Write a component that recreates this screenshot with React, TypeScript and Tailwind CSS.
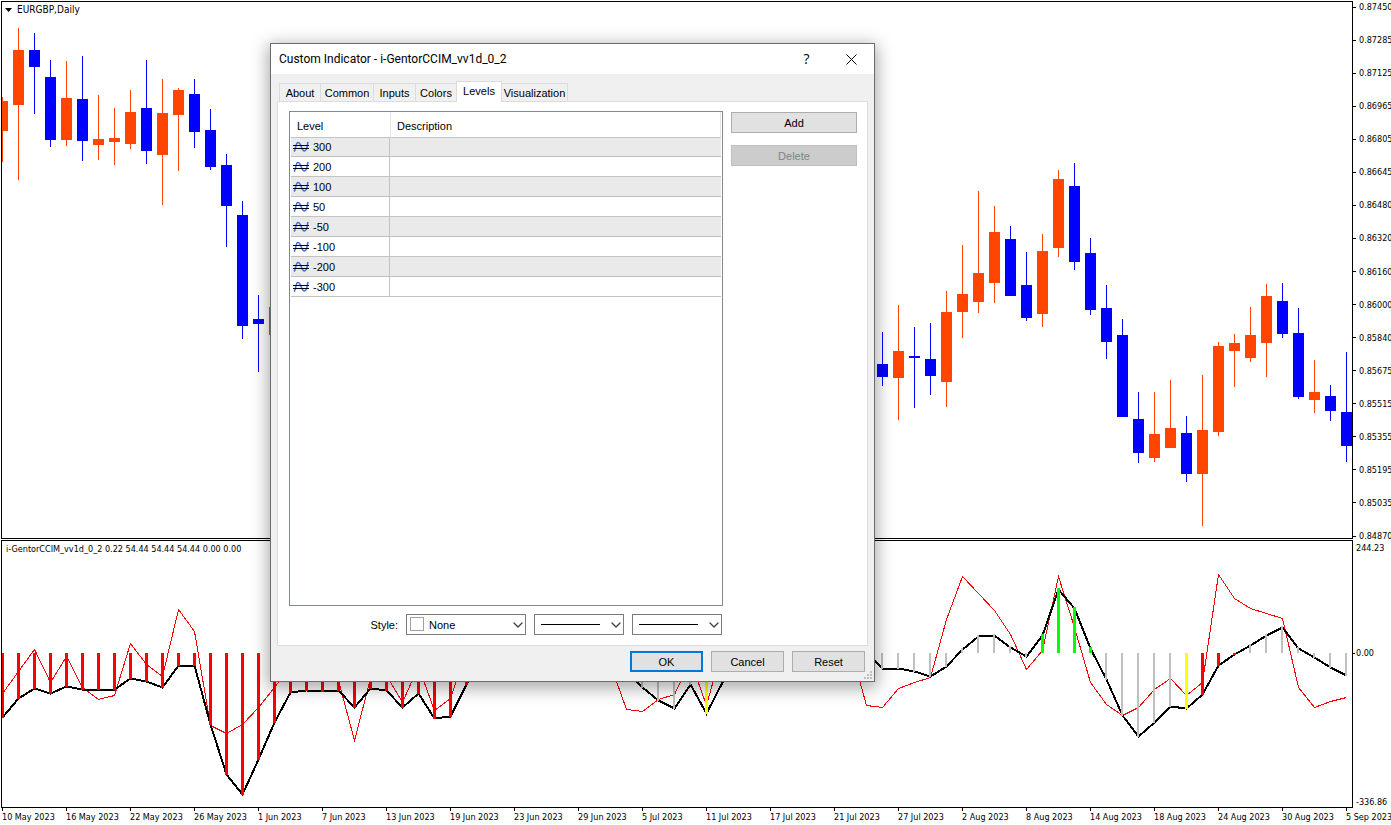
import { ChevronDown } from 'lucide-react'
import type { ReactNode } from 'react'

type CandleColor = 'up' | 'down'
type BarColor = 'red' | 'gray' | 'green' | 'yellow'

// slot, high, low, body top, body bottom
type Candle = [number, number, number, number, number, CandleColor]

const candleFill: Record<CandleColor, string> = {
  up: 'fill-[#ff4500]',
  down: 'fill-[#0000ff]',
}

const barStyle: Record<BarColor, { className: string; width: number }> = {
  red: { className: 'fill-[#ff0000]', width: 3 },
  gray: { className: 'fill-[#c0c0c0]', width: 2 },
  green: { className: 'fill-[#00ff00]', width: 3 },
  yellow: { className: 'fill-[#ffff00]', width: 3 },
}

const candles: Candle[] = [
  [0, 97, 162, 101, 131, 'up'],
  [1, 28, 180, 50, 105, 'up'],
  [2, 33, 114, 50, 67, 'down'],
  [3, 60, 147, 77, 140, 'down'],
  [4, 61, 146, 98, 140, 'up'],
  [5, 56, 161, 99, 141, 'down'],
  [6, 95, 160, 139, 145, 'up'],
  [7, 108, 165, 138, 142, 'up'],
  [8, 90, 149, 112, 144, 'up'],
  [9, 60, 164, 108, 151, 'down'],
  [10, 79, 205, 113, 155, 'up'],
  [11, 88, 171, 90, 115, 'up'],
  [12, 79, 148, 94, 132, 'down'],
  [13, 109, 170, 130, 167, 'down'],
  [14, 154, 247, 165, 206, 'down'],
  [15, 201, 339, 215, 326, 'down'],
  [16, 295, 372, 319, 324, 'down'],
  [17, 300, 340, 307, 335, 'up'],
  [55, 332, 386, 364, 377, 'down'],
  [56, 305, 420, 351, 378, 'up'],
  [57, 327, 408, 356, 358, 'down'],
  [58, 323, 395, 359, 376, 'down'],
  [59, 291, 407, 312, 382, 'up'],
  [60, 245, 338, 294, 312, 'up'],
  [61, 191, 313, 273, 302, 'up'],
  [62, 206, 303, 232, 283, 'up'],
  [63, 226, 296, 239, 296, 'down'],
  [64, 252, 321, 285, 318, 'down'],
  [65, 234, 327, 251, 314, 'up'],
  [66, 170, 257, 179, 248, 'up'],
  [67, 163, 270, 186, 262, 'down'],
  [68, 238, 315, 253, 310, 'down'],
  [69, 285, 359, 308, 342, 'down'],
  [70, 319, 417, 335, 417, 'down'],
  [71, 392, 463, 419, 453, 'down'],
  [72, 392, 462, 434, 458, 'up'],
  [73, 380, 448, 428, 448, 'up'],
  [74, 416, 482, 433, 474, 'down'],
  [75, 375, 526, 430, 474, 'up'],
  [76, 342, 436, 346, 432, 'up'],
  [77, 334, 387, 343, 351, 'up'],
  [78, 307, 362, 335, 358, 'up'],
  [79, 284, 377, 296, 343, 'up'],
  [80, 283, 338, 301, 334, 'down'],
  [81, 308, 399, 333, 397, 'down'],
  [82, 360, 413, 392, 400, 'up'],
  [83, 385, 421, 396, 411, 'down'],
  [84, 352, 462, 412, 446, 'down'],
]

interface Segment {
  start: number
  values: number[]
}

const mainLine: Segment[] = [
  {
    start: 0,
    values: [
      717, 698, 688, 693, 686, 689, 689, 689, 678, 681, 687, 665, 665, 724,
      774, 794, 759, 722, 692, 690, 691, 690, 707, 688, 690, 707, 693, 718,
      716, 684, 660,
    ],
  },
  { start: 39, values: [672, 687, 700, 708, 684, 713, 682, 655] },
  {
    start: 54,
    values: [
      652, 668, 668, 671, 676, 666, 649, 636, 635, 647, 656, 635, 589, 608,
      648, 679, 715, 736, 722, 706, 708, 694, 665, 654, 645, 635, 627, 648,
      657, 667, 675,
    ],
  },
]

const signalLine: Segment[] = [
  {
    start: 0,
    values: [
      693, 671, 649, 682, 656, 687, 699, 695, 643, 664, 676, 609, 631, 725,
      733, 724, 707, 687, 665, 660, 660, 680, 740, 678, 675, 702, 666, 710,
      698, 650,
    ],
  },
  { start: 38, values: [664, 709, 711, 699, 694, 660, 705, 647] },
  {
    start: 53,
    values: [
      647, 705, 707, 688, 682, 677, 619, 576, 593, 610, 634, 669, 650, 576,
      627, 682, 704, 715, 707, 689, 678, 695, 682, 574, 598, 608, 613, 618,
      687, 707, 701, 697,
    ],
  },
]

const barRanges: { from: number; to: number; color: BarColor }[] = [
  { from: 0, to: 29, color: 'red' },
  { from: 39, to: 43, color: 'gray' },
  { from: 44, to: 44, color: 'yellow' },
  { from: 55, to: 64, color: 'gray' },
  { from: 65, to: 68, color: 'green' },
  { from: 69, to: 73, color: 'gray' },
  { from: 74, to: 74, color: 'yellow' },
  { from: 75, to: 77, color: 'red' },
  { from: 78, to: 84, color: 'gray' },
]

const priceLabels = [
  '0.87450',
  '0.87285',
  '0.87125',
  '0.86965',
  '0.86805',
  '0.86645',
  '0.86480',
  '0.86320',
  '0.86160',
  '0.86000',
  '0.85840',
  '0.85675',
  '0.85515',
  '0.85355',
  '0.85195',
  '0.85035',
  '0.84870',
]

const dateLabels = [
  '10 May 2023',
  '16 May 2023',
  '22 May 2023',
  '26 May 2023',
  '1 Jun 2023',
  '7 Jun 2023',
  '13 Jun 2023',
  '19 Jun 2023',
  '23 Jun 2023',
  '29 Jun 2023',
  '5 Jul 2023',
  '11 Jul 2023',
  '17 Jul 2023',
  '21 Jul 2023',
  '27 Jul 2023',
  '2 Aug 2023',
  '8 Aug 2023',
  '14 Aug 2023',
  '18 Aug 2023',
  '24 Aug 2023',
  '30 Aug 2023',
  '5 Sep 2023',
]

const tabs = [
  { name: 'About', width: 'w-[42px]' },
  { name: 'Common', width: 'w-[54px]' },
  { name: 'Inputs', width: 'w-[43px]' },
  { name: 'Colors', width: 'w-[42px]' },
  { name: 'Levels', width: 'w-[46px]' },
  { name: 'Visualization', width: 'w-[67px]' },
]

const levels = [300, 200, 100, 50, -50, -100, -200, -300]

const ZERO_Y = 653
const slotX = (slot: number) => 2 + slot * 16

function linePoints({ start, values }: Segment) {
  return values.map((y, i) => `${slotX(start + i)},${y}`).join(' ')
}

function mainValue(slot: number) {
  const segment = mainLine.find(
    ({ start, values }) => slot >= start && slot < start + values.length,
  )
  return segment ? segment.values[slot - segment.start] : ZERO_Y
}

function PriceChart() {
  return (
    <svg
      aria-label="EURGBP daily candles"
      className="block h-full w-full"
      preserveAspectRatio="none"
      role="img"
      shapeRendering="crispEdges"
      viewBox="2 2 1350 536"
    >
      {candles.map(([slot, high, low, top, bottom, color]) => (
        <g key={slot} className={candleFill[color]}>
          <rect height={low - high} width={1} x={slotX(slot)} y={high} />
          <rect height={bottom - top} width={11} x={slotX(slot) - 5} y={top} />
        </g>
      ))}
    </svg>
  )
}

function IndicatorChart() {
  return (
    <svg
      aria-label="i-GentorCCIM indicator"
      className="block h-full w-full"
      preserveAspectRatio="none"
      role="img"
      shapeRendering="crispEdges"
      viewBox="2 541 1350 266"
    >
      <g fill="none" transform="translate(0.5 0.5)">
        {signalLine.map((segment) => (
          <polyline
            key={segment.start}
            points={linePoints(segment)}
            stroke="#ff0000"
            strokeWidth={1}
          />
        ))}
        {mainLine.map((segment) => (
          <polyline
            key={segment.start}
            points={linePoints(segment)}
            stroke="#000000"
            strokeWidth={2}
          />
        ))}
      </g>
      {barRanges.map(({ from, to, color }) =>
        Array.from({ length: to - from + 1 }, (_, i) => {
          const slot = from + i
          const y = mainValue(slot)
          const top = y > ZERO_Y ? ZERO_Y : y - 1
          const bottom = y > ZERO_Y ? y + 1 : ZERO_Y
          return (
            <rect
              key={slot}
              className={barStyle[color].className}
              height={bottom - top}
              width={barStyle[color].width}
              x={slotX(slot) - 1}
              y={top}
            />
          )
        }),
      )}
    </svg>
  )
}

function LevelIcon() {
  return (
    <svg aria-hidden="true" className="h-3 w-4 shrink-0" viewBox="0 0 16 12">
      <path
        d="M1 10.5 C3 9 2.5 1.5 5 1.5 C8.5 1.5 8 10 11.5 10 C14 10 14 5 15 1"
        fill="none"
        stroke="#3f74dc"
        strokeWidth={1.6}
      />
      <path
        d="M0 4.5H16M0 7.5H16"
        shapeRendering="crispEdges"
        stroke="#000000"
        strokeWidth={1}
      />
    </svg>
  )
}

interface DropDownProps {
  label: string
  width: string
  className?: string
  children?: ReactNode
  options?: ReactNode
}

function DropDown({
  label,
  width,
  className = '',
  children,
  options,
}: DropDownProps) {
  return (
    <div className={`relative h-[21px] ${width}`}>
      <select
        aria-label={label}
        className={`block h-full w-full appearance-none border border-[#7a7a7a] bg-white text-black outline-none ${className}`}
      >
        {options ?? <option value="solid" />}
      </select>
      {children}
      <ChevronDown
        aria-hidden="true"
        className="pointer-events-none absolute top-[3px] right-0 size-4 text-[#444444]"
        strokeWidth={2}
      />
    </div>
  )
}

function LineSample() {
  return (
    <span className="pointer-events-none absolute top-2.5 right-6 left-[7px] h-px bg-black" />
  )
}

function PushButton({
  children,
  className,
  disabled,
}: {
  children: string
  className: string
  disabled?: boolean
}) {
  return (
    <button
      className={`flex h-[21px] items-center justify-center ${className}`}
      disabled={disabled}
      type="button"
    >
      {children}
    </button>
  )
}

function LevelsTable() {
  return (
    <div className="h-[495px] w-[434px] border border-[#828790] bg-white px-px">
      <table className="w-full table-fixed border-separate border-spacing-0 text-left">
        <thead>
          <tr className="h-[26px]">
            <th className="w-[99px] border-b border-[#c3c3c3] pt-0.5 pl-1.5 font-normal">
              Level
            </th>
            <th className="border-x border-b border-x-[#e5e5e5] border-b-[#c3c3c3] pt-0.5 pl-1.5 font-normal">
              Description
            </th>
          </tr>
        </thead>
        <tbody>
          {levels.map((level) => (
            <tr
              key={level}
              className="h-5 bg-white first:h-[19px] odd:bg-[#eaeaea]"
            >
              <td className="border-r border-b border-[#c3c3c3] p-0 pl-0.5">
                <div className="flex items-center gap-1">
                  <LevelIcon />
                  {level}
                </div>
              </td>
              <td className="border-b border-[#c3c3c3] p-0" />
            </tr>
          ))}
        </tbody>
      </table>
    </div>
  )
}

function IndicatorDialog() {
  return (
    <div
      aria-labelledby="dialog-title"
      className="absolute top-[43px] left-[270px] w-[605px] border border-[#6b6b6b] bg-[#f0f0f0] font-['Liberation_Sans',sans-serif] text-[11px] leading-4 text-black shadow-[0_4px_16px_2px_rgba(0,0,0,0.35)]"
      role="dialog"
    >
      <header className="flex h-[30px] items-center bg-white pl-2">
        <h1
          className="flex-1 font-[Roboto,sans-serif] text-[12px]"
          id="dialog-title"
        >
          Custom Indicator - i-GentorCCIM_vv1d_0_2
        </h1>
        <button
          aria-label="Help"
          className="flex h-full w-[45px] items-center justify-center font-['Open_Sans',sans-serif] text-[14px]"
          type="button"
        >
          ?
        </button>
        <button
          aria-label="Close"
          className="flex h-full w-[45px] items-center justify-center"
          type="button"
        >
          <svg aria-hidden="true" className="size-[11px]" viewBox="0 0 11 11">
            <path d="M0.5 0.5L10.5 10.5M10.5 0.5L0.5 10.5" stroke="#000000" />
          </svg>
        </button>
      </header>

      <div className="px-1.5 pt-[7px]">
        <div className="flex h-5 items-end pl-0.5" role="tablist">
          {tabs.map(({ name, width }) => {
            const selected = name === 'Levels'
            return (
              <button
                key={name}
                aria-selected={selected}
                className={`-mr-px flex justify-center border-[#dcdcdc] ${width} ${
                  selected
                    ? 'relative -mb-px h-[21px] border-x border-t bg-white pt-px'
                    : 'h-[18px] border-x border-t pt-px'
                }`}
                role="tab"
                type="button"
              >
                {name}
              </button>
            )
          })}
        </div>

        <div
          className="border border-[#dcdcdc] bg-white pt-[9px] pr-2.5 pb-2.5 pl-[11px]"
          role="tabpanel"
        >
          <div className="flex gap-2">
            <LevelsTable />
            <div className="flex flex-1 flex-col gap-3 pt-px">
              <PushButton className="border border-[#adadad] bg-[#e1e1e1]">
                Add
              </PushButton>
              <PushButton
                className="border border-[#bfbfbf] bg-[#cccccc] text-[#838383]"
                disabled
              >
                Delete
              </PushButton>
            </div>
          </div>

          <div className="mt-2 flex w-[433px] items-center justify-end gap-2">
            <span>Style:</span>
            <DropDown
              className="pl-[22px]"
              label="Style"
              options={<option>None</option>}
              width="w-[120px]"
            >
              <span className="pointer-events-none absolute top-[3px] left-1 size-3.5 border border-[#a0a0a0] bg-white" />
            </DropDown>
            <DropDown label="Line style" width="w-[90px]">
              <LineSample />
            </DropDown>
            <DropDown label="Line width" width="w-[90px]">
              <LineSample />
            </DropDown>
          </div>
        </div>
      </div>

      <footer className="flex justify-end gap-2 pt-[5px] pr-[9px] pb-[9px]">
        <PushButton className="w-[73px] border-2 border-[#0078d7] bg-[#e1e1e1]">
          OK
        </PushButton>
        <PushButton className="w-[73px] border border-[#adadad] bg-[#e1e1e1]">
          Cancel
        </PushButton>
        <PushButton className="w-[73px] border border-[#adadad] bg-[#e1e1e1]">
          Reset
        </PushButton>
      </footer>

      <svg
        aria-hidden="true"
        className="absolute right-0.5 bottom-0.5 size-2 fill-[#bfbfbf]"
        viewBox="0 0 8 8"
      >
        <path d="M6 0h2v2h-2zM3 3h2v2h-2zM6 3h2v2h-2zM0 6h2v2h-2zM3 6h2v2h-2zM6 6h2v2h-2z" />
      </svg>
    </div>
  )
}

export default function App() {
  return (
    <main className="relative grid h-screen grid-cols-[1fr_38px] grid-rows-[538fr_268fr_16px] gap-y-px overflow-hidden bg-white pt-px pl-px font-['DejaVu_Sans_Condensed','DejaVu_Sans',sans-serif] text-[9px] leading-3 text-black">
      <section className="relative min-h-0 border border-black">
        <PriceChart />
        <p className="absolute top-0.5 left-[3px] flex items-center gap-[5px] text-[10px]">
          <svg aria-hidden="true" className="h-1 w-[7px]" viewBox="0 0 7 4">
            <path d="M0 0h7L3.5 4z" />
          </svg>
          EURGBP,Daily
        </p>
      </section>
      <div className="-mb-[3px] flex flex-col justify-between">
        {priceLabels.map((label) => (
          <div key={label} className="flex items-center gap-[3px]">
            <span className="h-px w-[3px] shrink-0 bg-black" />
            {label}
          </div>
        ))}
      </div>

      <section className="relative min-h-0 border border-black">
        <IndicatorChart />
        <p className="absolute top-0.5 left-1">
          i-GentorCCIM_vv1d_0_2 0.22 54.44 54.44 54.44 0.00 0.00
        </p>
      </section>
      <div className="flex flex-col pt-0.5 whitespace-nowrap">
        <div className="pl-[3px]">244.23</div>
        <div className="grow-[93]" />
        <div className="flex items-center gap-px">
          <span className="h-px w-0.5 shrink-0 bg-black" />
          0.00
        </div>
        <div className="grow-[136]" />
        <div className="pl-[3px]">-336.86</div>
      </div>

      <div className="col-span-2 -mt-px flex overflow-hidden">
        {dateLabels.map((label) => (
          <div key={label} className="w-16 shrink-0 pl-px whitespace-nowrap">
            <div className="h-[3px] w-px bg-black" />
            {label}
          </div>
        ))}
      </div>

      <IndicatorDialog />
    </main>
  )
}
